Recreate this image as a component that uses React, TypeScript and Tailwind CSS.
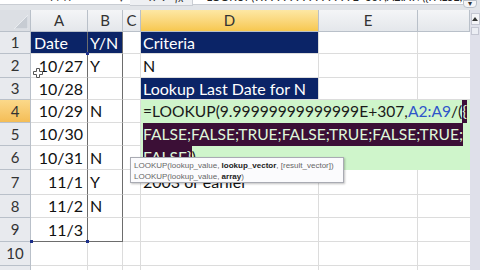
import React from "react";

type Row = {
  n: string;
  h: string;
  a?: string;
  b?: string;
  d?: string;
  navyAB?: boolean;
  navyD?: boolean;
  active?: boolean;
  inRange?: boolean;
  last?: boolean;
};

const ROWS: Row[] = [
  { n: "1", h: "h-[22px]", a: "Date", b: "Y/N", d: "Criteria", navyAB: true, navyD: true, inRange: true },
  { n: "2", h: "h-[24px]", a: "10/27", b: "Y", d: "N", inRange: true },
  { n: "3", h: "h-[22px]", a: "10/28", d: "Lookup Last Date for N", navyD: true, inRange: true },
  { n: "4", h: "h-[23px]", a: "10/29", b: "N", active: true, inRange: true },
  { n: "5", h: "h-[23px]", a: "10/30", inRange: true },
  { n: "6", h: "h-[24px]", a: "10/31", b: "N", inRange: true },
  { n: "7", h: "h-[25px]", a: "11/1", b: "Y", d: "2003 or earlier", inRange: true },
  { n: "8", h: "h-[23px]", a: "11/2", b: "N", inRange: true },
  { n: "9", h: "h-[24px]", a: "11/3", inRange: true, last: true },
  { n: "10", h: "h-[24px]" },
  { n: "11", h: "h-[24px]" },
];

const GRID = "border-[#dcdcdc]";

function ColHeader({ w, label, selected }: { w: string; label: string; selected?: boolean }) {
  return (
    <div
      className={`${w} h-full flex items-center justify-center border-r border-b border-[#b9c0c9] text-[15px] text-[#333] ${
        selected
          ? "bg-gradient-to-b from-[#fde7a3] to-[#f7c84e]"
          : "bg-gradient-to-b from-[#f4f5f7] to-[#e4e7eb]"
      }`}
    >
      {label}
    </div>
  );
}

function SheetRow({ r }: { r: Row }) {
  const abEdge = r.inRange ? "border-r-[#6d6d6d]" : "";
  const abBottom = r.last ? "border-b-[#6d6d6d]" : "";
  return (
    <div className={`flex ${r.h}`}>
      <div
        className={`w-[31px] flex items-center justify-center border-r border-b border-[#b9c0c9] text-[15px] text-[#333] ${
          r.active ? "bg-gradient-to-b from-[#fbd98a] to-[#f4bd55]" : "bg-[#e8eaee]"
        }`}
      >
        {r.n}
      </div>
      <div
        className={`w-[57px] flex items-center border-r border-b ${GRID} ${abEdge} ${abBottom} ${
          r.navyAB ? "bg-[#0b2467] text-white justify-start pl-[3px]" : "justify-end pr-[4px] text-[#111]"
        }`}
      >
        {r.a}
      </div>
      <div
        className={`w-[35px] flex items-center pl-[2px] border-r border-b ${GRID} ${abEdge} ${abBottom} ${
          r.navyAB ? "bg-[#0b2467] text-white" : "text-[#111]"
        }`}
      >
        {r.b}
      </div>
      <div className={`w-[18px] border-r border-b ${GRID}`} />
      <div
        className={`w-[178px] flex items-center pl-[2px] whitespace-nowrap border-r border-b ${GRID} ${
          r.navyD ? "bg-[#0b2467] text-white" : "text-[#111]"
        }`}
      >
        {r.d}
      </div>
      <div className={`w-[99px] border-r border-b ${GRID}`} />
      <div className={`w-[52px] border-b ${GRID}`} />
    </div>
  );
}

function Sel({ children }: { children: React.ReactNode }) {
  return (
    <span className="inline-block bg-[#3b0f36] text-[#dff7da] leading-[23px]">{children}</span>
  );
}

export default function App() {
  return (
    <div
      className="w-[480px] h-[270px] overflow-hidden bg-white flex flex-col"
      style={{ fontFamily: "Lato, 'Liberation Sans', sans-serif" }}
    >
      {/* formula bar remnant */}
      <div className="h-[10px] flex bg-[#e1e4e8] overflow-hidden shrink-0">
        <div className="w-[130px] h-[5px] bg-white relative overflow-hidden border-b border-[#c9cdd3]">
          <span className="absolute left-[50px] top-[-9px] text-[11px] text-[#333] leading-none">FMT</span>
          <span className="absolute left-[119px] top-[-6px] text-[9px] text-[#444] leading-none">▾</span>
        </div>
        <div className="w-[63px] h-[6px] bg-[#eef0f3] relative overflow-hidden border-b border-r border-[#c9cdd3]">
          <span className="absolute left-[18px] top-[-7px] text-[10px] text-[#333] leading-none">✕</span>
          <span className="absolute left-[31px] top-[-7px] text-[10px] text-[#333] leading-none">✓</span>
          <span className="absolute left-[45px] top-[-8px] text-[11px] italic text-[#333] leading-none">fx</span>
        </div>
        <div className="w-[270px] h-[5px] bg-white relative overflow-hidden border-b border-[#c9cdd3]">
          <span className="absolute left-[7px] top-[-9px] text-[11px] text-[#222] leading-none whitespace-nowrap">
            =LOOKUP(9.99999999999999E+307,A2:A9/(&#123;FALSE;FALSE;
          </span>
        </div>
        <div className="w-[14px] h-[8px] bg-[#f4f5f7] border border-[#b9c0c9] rounded-b-sm flex items-start justify-center overflow-hidden">
          <span className="text-[8px] leading-none text-[#333] -mt-[2px]">▾</span>
        </div>
      </div>

      <div className="flex flex-1 relative">
        <div className="w-[470px] flex flex-col relative">
          {/* column headers */}
          <div className="flex h-[22px]">
            <div className="w-[31px] h-full bg-[#dcdfe4] border-r border-b border-[#b9c0c9] flex items-end justify-end pr-[2px] pb-[2px]">
              <svg width="14" height="14" viewBox="0 0 14 14">
                <polygon points="14,0 14,14 0,14" fill="#c7ccd3" stroke="#e9ecf0" strokeWidth="1" />
              </svg>
            </div>
            <ColHeader w="w-[57px]" label="A" />
            <ColHeader w="w-[35px]" label="B" />
            <ColHeader w="w-[18px]" label="C" />
            <ColHeader w="w-[178px]" label="D" selected />
            <ColHeader w="w-[99px]" label="E" />
            <ColHeader w="w-[52px]" label="" />
          </div>

          <div className="text-[16px] leading-none">
            {ROWS.map((r) => (
              <SheetRow key={r.n} r={r} />
            ))}
          </div>

          {/* range handles for A2:A9 */}
          <div className="absolute left-[86px] top-[42px] w-[3px] h-[3px] bg-[#1c2f8a]" />
          <div className="absolute left-[30px] top-[230px] w-[3px] h-[3px] bg-[#1c2f8a]" />
          <div className="absolute left-[86px] top-[230px] w-[3px] h-[3px] bg-[#1c2f8a]" />

          {/* cell cursor */}
          <svg className="absolute left-[33px] top-[58px]" width="10" height="10" viewBox="0 0 10 10">
            <path
              d="M3.5 0.5h3v3h3v3h-3v3h-3v-3h-3v-3h3z"
              fill="#ffffff"
              stroke="#555"
              strokeWidth="1"
            />
          </svg>

          {/* in-cell editor over D4 */}
          <div className="absolute left-[141px] top-[90px] w-[329px] h-[70px] bg-[#cff5cb] pl-[2px] text-[15.6px] leading-[23px] text-[#1a1a1a] whitespace-nowrap">
            <div className="h-[23px]">
              =LOOKUP(9.99999999999999E+307,<span className="text-[#2f55c9]">A2:A9</span>/(
              <Sel>&#123;</Sel>
            </div>
            <div className="h-[23px]">
              <Sel>FALSE;FALSE;TRUE;FALSE;TRUE;FALSE;TRUE;</Sel>
            </div>
            <div className="h-[23px]">
              <Sel>FALSE&#125;</Sel>)
            </div>
          </div>

          {/* function tooltip */}
          <div
            className="absolute left-[130px] top-[147px] w-[214px] h-[26px] bg-[#fbfbfd] border border-[#a9abb3] shadow-[1px_1px_2px_rgba(0,0,0,0.25)] px-[3px] pt-[2px] text-[8px] leading-[11px] text-[#666] whitespace-nowrap"
            style={{ fontFamily: "'Liberation Sans', sans-serif" }}
          >
            <div>
              LOOKUP(lookup_value, <b className="text-[#222]">lookup_vector</b>, [result_vector])
            </div>
            <div>
              LOOKUP(lookup_value, <b className="text-[#222]">array</b>)
            </div>
          </div>
        </div>

        {/* vertical scrollbar */}
        <div className="w-[10px] bg-[#dfe0ea] flex flex-col items-center pt-[3px] gap-[2px]">
          <div className="w-[9px] h-[12px] bg-[#f4f4f8] border border-[#c4c6d2] flex items-center justify-center">
            <svg width="6" height="4" viewBox="0 0 6 4">
              <polygon points="3,0 6,4 0,4" fill="#333" />
            </svg>
          </div>
          <div className="w-[8px] h-[8px] bg-[#eceef4] border border-[#c4c6d2]" />
        </div>
      </div>
    </div>
  );
}
